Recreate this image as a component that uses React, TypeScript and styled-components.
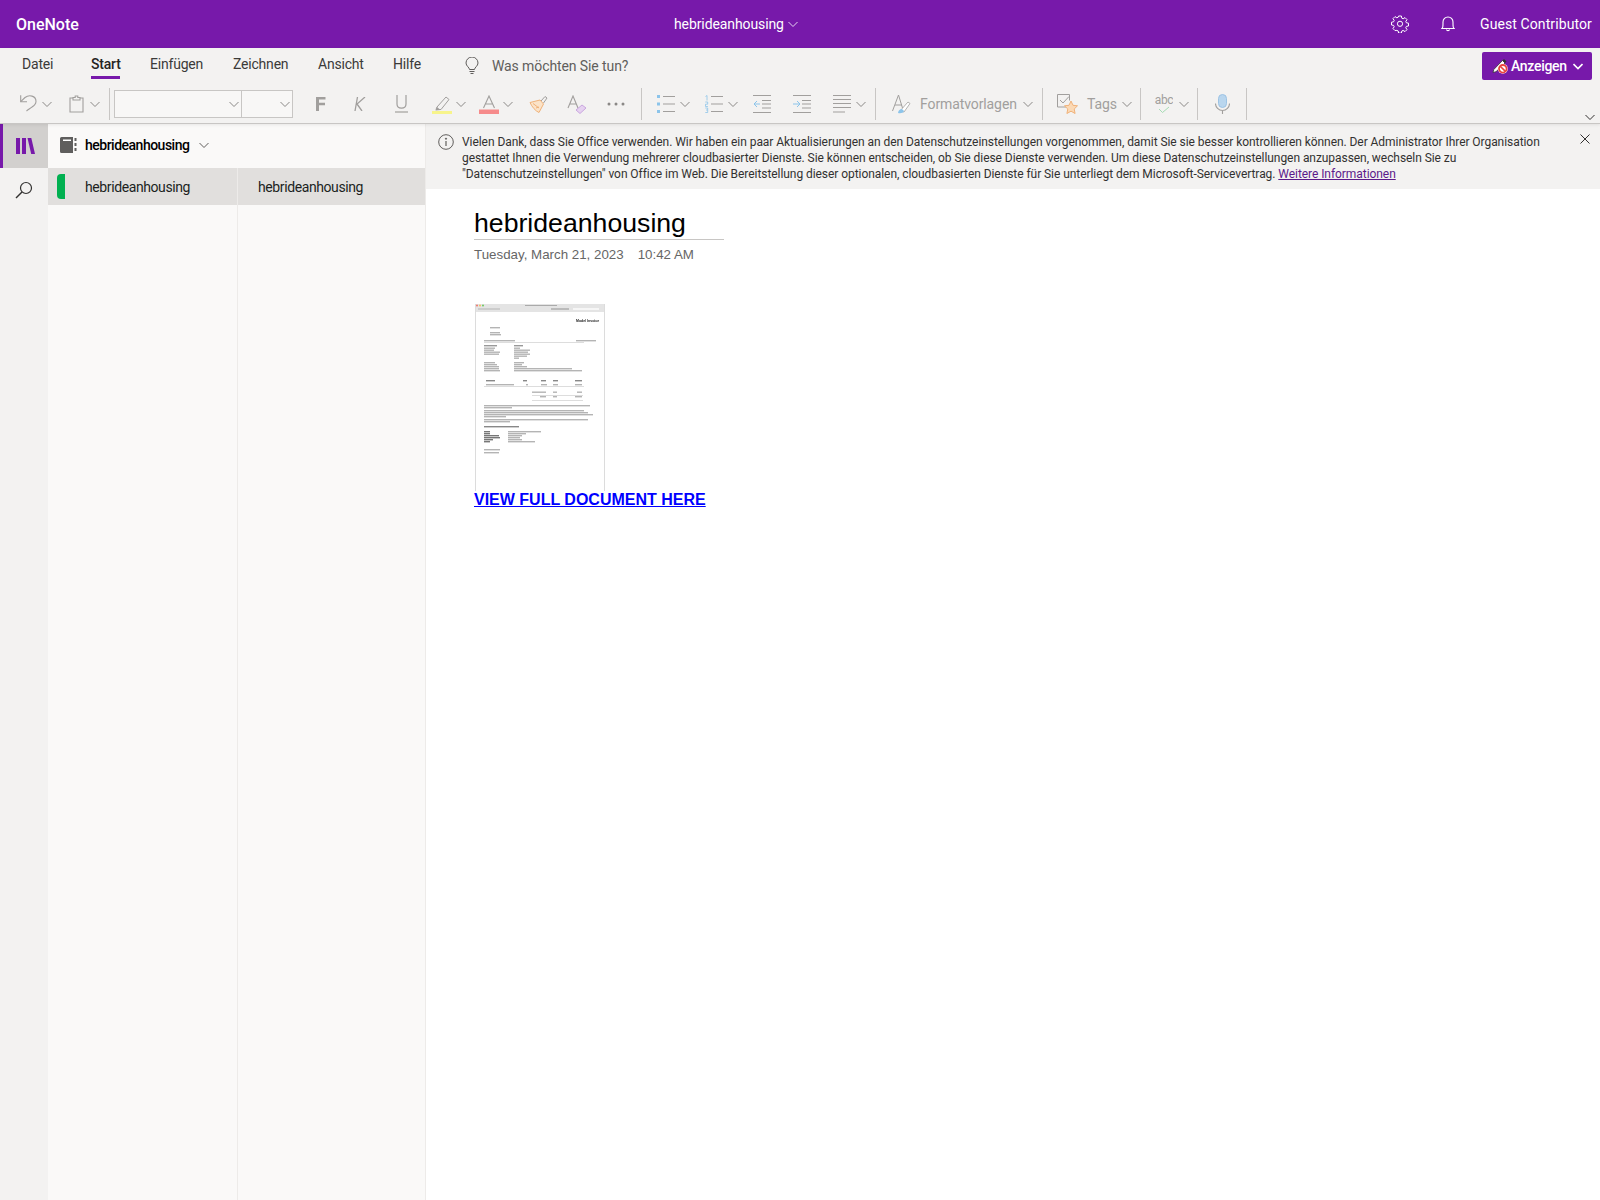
import React from 'react';
import styled, { createGlobalStyle } from 'styled-components';

const UI_FONT = 'Roboto, "Noto Sans", sans-serif';
const PURPLE = '#7719aa';

const GlobalStyle = createGlobalStyle`
  html, body {
    margin: 0;
    padding: 0;
    background: #fff;
    overflow: hidden;
  }
  * {
    box-sizing: border-box;
  }
  svg {
    flex: none;
  }
`;

const Page = styled.div`
  width: 1600px;
  height: 1200px;
  display: flex;
  flex-direction: column;
  overflow: hidden;
  font-family: ${UI_FONT};
  color: #252423;
`;

const TopBar = styled.header`
  height: 48px;
  flex: none;
  display: flex;
  align-items: center;
  background: ${PURPLE};
  color: #fff;
  padding: 0 8px 0 16px;
`;

const Brand = styled.div`
  width: 658px;
  font-size: 16px;
  font-weight: 500;
`;

const DocTitle = styled.div`
  display: flex;
  align-items: center;
  gap: 4px;
  font-size: 14px;
  letter-spacing: -0.1px;
`;

const TopRight = styled.div`
  margin-left: auto;
  display: flex;
  align-items: center;
`;

const TopIcon = styled.span`
  width: 48px;
  height: 48px;
  display: flex;
  align-items: center;
  justify-content: center;
`;

const UserName = styled.span`
  width: 112px;
  margin-left: 8px;
  font-size: 14px;
  letter-spacing: 0.1px;
  white-space: nowrap;
`;

const Ribbon = styled.div`
  height: 76px;
  flex: none;
  position: relative;
  z-index: 2;
  background: #f3f2f1;
  border-bottom: 1px solid #c8c6c4;
  box-shadow: 0 1px 3px rgba(0, 0, 0, 0.08);
`;

const TabRow = styled.div`
  height: 34px;
  display: flex;
  align-items: flex-start;
  padding: 0 8px 0 22px;
`;

const Tab = styled.div<{ $w: number; $mr?: number; $active?: boolean }>`
  width: ${(p) => p.$w}px;
  height: 31px;
  margin-right: ${(p) => p.$mr ?? 30}px;
  padding-top: 5px;
  font-size: 14px;
  line-height: 22px;
  letter-spacing: -0.2px;
  white-space: nowrap;
  color: ${(p) => (p.$active ? '#252423' : '#3b3a39')};
  font-weight: ${(p) => (p.$active ? 500 : 400)};
  border-bottom: 3px solid ${(p) => (p.$active ? PURPLE : 'transparent')};
`;

const SearchHint = styled.div`
  display: flex;
  align-items: center;
  gap: 13px;
  margin-left: 14px;
  height: 35px;
  font-size: 14px;
  letter-spacing: -0.1px;
  color: #605e5c;
`;

const ViewButton = styled.div`
  margin: 4px 0 0 auto;
  width: 110px;
  height: 28px;
  display: flex;
  align-items: center;
  padding-left: 10px;
  border-radius: 2px;
  background: ${PURPLE};
  color: #fff;
  font-size: 14px;
  font-weight: 500;
  letter-spacing: -0.3px;
`;

const ViewLabel = styled.span`
  width: 56px;
  margin: 0 3px;
  white-space: nowrap;
`;

const ToolRow = styled.div`
  height: 41px;
  display: flex;
  align-items: center;
  padding-top: 3px;
`;

const Tool = styled.span<{ $w?: number; $ml?: number }>`
  flex: none;
  width: ${(p) => p.$w ?? 24}px;
  margin-left: ${(p) => p.$ml ?? 0}px;
  height: 30px;
  display: flex;
  align-items: center;
  justify-content: center;
`;

const Separator = styled.span<{ $ml: number }>`
  flex: none;
  width: 1px;
  height: 32px;
  margin-left: ${(p) => p.$ml}px;
  background: #c8c6c4;
`;

const FontBox = styled.span<{ $w: number; $ml?: number }>`
  flex: none;
  width: ${(p) => p.$w}px;
  height: 28px;
  margin-left: ${(p) => p.$ml ?? 0}px;
  margin-right: -1px;
  display: flex;
  align-items: center;
  justify-content: flex-end;
  padding-right: 2px;
  background: #f8f7f6;
  border: 1px solid #c8c6c4;
`;

const ToolLabel = styled.span<{ $w: number; $ml: number }>`
  flex: none;
  width: ${(p) => p.$w}px;
  margin-left: ${(p) => p.$ml}px;
  font-size: 14px;
  letter-spacing: -0.1px;
  white-space: nowrap;
  color: #a19f9d;
`;

const CollapseRibbon = styled.span`
  position: absolute;
  right: 5px;
  bottom: 0;
  height: 12px;
  display: flex;
  align-items: center;
`;

const Body = styled.div`
  flex: 1;
  display: flex;
  min-height: 0;
`;

const Rail = styled.nav`
  width: 48px;
  flex: none;
  background: #f3f2f1;
`;

const RailItem = styled.div<{ $active?: boolean }>`
  height: 44px;
  display: flex;
  align-items: center;
  justify-content: center;
  background: ${(p) => (p.$active ? '#d2d0ce' : 'transparent')};
  border-left: ${(p) => (p.$active ? `3px solid ${PURPLE}` : 'none')};
`;

const NavPane = styled.aside`
  width: 378px;
  flex: none;
  display: flex;
  flex-direction: column;
  background: #faf9f8;
  border-right: 1px solid #edebe9;
`;

const NavHeader = styled.div`
  height: 44px;
  flex: none;
  display: flex;
  align-items: center;
  padding: 0 0 2px 12px;
  font-size: 14px;
  font-weight: 500;
  letter-spacing: -0.5px;
  color: #000;
`;

const NotebookName = styled.span`
  width: 104px;
  margin: 0 10px 0 8px;
  white-space: nowrap;
`;

const NavColumns = styled.div`
  flex: 1;
  display: flex;
`;

const SectionColumn = styled.div`
  width: 190px;
  flex: none;
  border-right: 1px solid #edebe9;
`;

const PageColumn = styled.div`
  flex: 1;
`;

const NavRow = styled.div<{ $pad: number }>`
  height: 37px;
  display: flex;
  align-items: center;
  padding-left: ${(p) => p.$pad}px;
  background: #e1dfdd;
  font-size: 14px;
  letter-spacing: -0.4px;
  color: #201f1e;
`;

const SectionTab = styled.span`
  width: 8px;
  height: 25px;
  margin-right: 20px;
  background: #00b050;
  border-radius: 4px 0 0 4px;
`;

const Content = styled.main`
  flex: 1;
  min-width: 0;
  display: flex;
  flex-direction: column;
  background: #fff;
`;

const Notice = styled.div`
  height: 65px;
  flex: none;
  display: flex;
  align-items: flex-start;
  padding: 10px 10px 0 12px;
  background: #f3f2f1;
`;

const NoticeText = styled.p`
  margin: 0 0 0 8px;
  flex: 1;
  font-size: 12px;
  line-height: 16px;
  letter-spacing: -0.06px;
  white-space: nowrap;
  color: #323130;
`;

const NoticeLink = styled.a`
  color: #5c1a8a;
  text-decoration: underline;
`;

const Sheet = styled.article`
  padding: 17px 0 0 48px;
  font-family: "Liberation Sans", Arial, sans-serif;
`;

const PageTitle = styled.h1`
  width: 250px;
  height: 34px;
  margin: 0;
  border-bottom: 1px solid #c8c6c4;
  font-size: 26.67px;
  font-weight: 400;
  line-height: 34px;
  color: #000;
`;

const PageDate = styled.div`
  display: flex;
  gap: 14px;
  margin-top: 7px;
  font-size: 13.33px;
  line-height: 16px;
  color: #666;
`;

const Thumb = styled.svg`
  display: block;
  margin: 41px 0 0 1px;
`;

const DocLink = styled.a`
  display: block;
  font-size: 16px;
  font-weight: 700;
  line-height: 18px;
  color: #0000ff;
  text-decoration: underline;
`;

const Chevron = ({ color = '#8a8886', weight = 1 }: { color?: string; weight?: number }) => (
  <svg width="10" height="10" viewBox="0 0 10 10" fill="none">
    <path d="M0.5 3L5 7.5L9.5 3" stroke={color} strokeWidth={weight} />
  </svg>
);

const Gear = () => (
  <svg width="18" height="18" viewBox="0 0 18 18" fill="none" stroke="#fff" strokeWidth="1">
    <path d="M7.6 1h2.8l.4 2.2 1.3.6 1.9-1.2 2 2-1.2 1.9.6 1.3 2.1.4v2.8l-2.1.4-.6 1.3 1.2 1.9-2 2-1.9-1.2-1.3.6-.4 2.1H7.6l-.4-2.1-1.3-.6L4 15.6l-2-2 1.2-1.9-.6-1.3-2.1-.4V7.2l2.1-.4.6-1.3L2 3.6l2-2 1.9 1.2 1.3-.6z" />
    <circle cx="9" cy="8.8" r="2.6" />
  </svg>
);

const Bell = () => (
  <svg width="14" height="16" viewBox="0 0 14 16" fill="none" stroke="#fff" strokeWidth="1.1">
    <path d="M1 12.5c1-.6 1-2 1-4.5V6a5 5 0 0 1 10 0v2c0 2.500 0 3.900 1 4.500z" />
    <path d="M5.500 13.500c.3 1.500 2.700 1.500 3 0" />
  </svg>
);

const Bulb = () => (
  <svg width="14" height="18" viewBox="0 0 14 18" fill="none" stroke="#605e5c" strokeWidth="1">
    <path d="M4.500 12.500c0-2-3.500-3.500-3.500-6.500a6 6 0 0 1 12 0c0 3-3.500 4.500-3.500 6.500z" />
    <path d="M4.500 14.500h5M5.500 16.500h3" />
  </svg>
);

const PenBlocked = () => (
  <svg width="16" height="16" viewBox="0 0 16 16" fill="none">
    <path d="M1 14.500l.8-3L10.500 2.500l2.500 2.500L4 13.700z" fill="#fff" stroke="#333" strokeWidth=".8" />
    <path d="M10.500 2.500L12 1l2.500 2.500L13 5z" fill="#333" />
    <circle cx="10.800" cy="10.800" r="5" fill="#fff" />
    <circle cx="10.800" cy="10.800" r="3.800" fill="none" stroke="#e8433f" strokeWidth="1.800" />
    <path d="M8.200 8.200l5.200 5.200" stroke="#e8433f" strokeWidth="1.600" />
  </svg>
);

const Undo = () => (
  <svg width="18" height="20" viewBox="0 0 18 20" fill="none" stroke="#a19f9d" strokeWidth="1.1">
    <path d="M.7 1.300V7.700H7" />
    <path d="M.7 7.700L5 3.500C9 .5 16 1.500 16 7.500c0 3-2 4-9.500 9.500" />
  </svg>
);

const Clipboard = () => (
  <svg width="15" height="18" viewBox="0 0 15 18" fill="none" stroke="#a19f9d" strokeWidth="1.1">
    <path d="M4 3H1v14h13V3h-3" />
    <path d="M4 5V2.500h2.200V1h2.600v1.500H11V5z" />
  </svg>
);

const BoldF = () => (
  <svg width="10" height="14" viewBox="0 0 10 14" fill="#a19f9d">
    <path d="M0 0h9.500v2.500H3v3.300h6v2.400H3V14H0z" />
  </svg>
);

const ItalicK = () => (
  <svg width="12" height="14" viewBox="0 0 12 14" fill="none" stroke="#a19f9d" strokeWidth="1.300">
    <path d="M3.500 0L1 14M11 0L3 7l5 7" />
  </svg>
);

const UnderlineU = () => (
  <svg width="13" height="18" viewBox="0 0 13 18" fill="none" stroke="#a19f9d" strokeWidth="1.200">
    <path d="M2 0v9c0 5.500 9 5.500 9 0V0" />
    <path d="M0 17h13" />
  </svg>
);

const Highlight = () => (
  <svg width="21" height="19" viewBox="0 0 21 19" fill="none">
    <path d="M5 12l9-10 3 2.500-8 10H4z" stroke="#a19f9d" strokeWidth="1" />
    <path d="M5 12l3.500 3L3.500 15.500z" fill="#a19f9d" />
    <rect y="16" width="20" height="3" fill="#f7f48b" />
  </svg>
);

const FontColor = () => (
  <svg width="20" height="19" viewBox="0 0 20 19" fill="none">
    <path d="M4.500 13L10 1l5.500 12M6.200 9h7.600" stroke="#a19f9d" strokeWidth="1.100" />
    <rect y="14.500" width="20" height="4.500" fill="#f68b8b" />
  </svg>
);

const Brush = () => (
  <svg width="19" height="19" viewBox="0 0 19 19" fill="none">
    <path d="M12 6l4-4.500 2 1.500-3.500 5" stroke="#a19f9d" strokeWidth="1" />
    <path d="M1 7.500l10-2.500 3.500 4L10 17.500C6.500 16 3 12 1 7.500z" fill="#fbe3c8" stroke="#f0b27a" strokeWidth="1" />
    <path d="M4 8.500l6 4.500M7 13l3-1" stroke="#f0b27a" strokeWidth="1" />
  </svg>
);

const ClearFormat = () => (
  <svg width="20" height="19" viewBox="0 0 20 19" fill="none">
    <path d="M1 13L6 1l5 12M2.600 9h6.800" stroke="#a19f9d" strokeWidth="1.100" />
    <path d="M9 15l6-5 4 3-6 5.500z" fill="#e6d2f0" stroke="#c9a6df" strokeWidth="1" />
  </svg>
);

const More = () => (
  <svg width="18" height="4" viewBox="0 0 18 4" fill="#8a8886">
    <circle cx="2" cy="2" r="1.500" />
    <circle cx="9" cy="2" r="1.500" />
    <circle cx="16" cy="2" r="1.500" />
  </svg>
);

const Bullets = () => (
  <svg width="18" height="18" viewBox="0 0 18 18" fill="none">
    <path d="M6 1.500h12M6 9h12M6 16.500h12" stroke="#a19f9d" strokeWidth="1" />
    <rect width="3" height="3" fill="#8cc4ea" />
    <rect y="7.500" width="3" height="3" fill="#8cc4ea" />
    <rect y="15" width="3" height="3" fill="#8cc4ea" />
  </svg>
);

const Numbered = () => (
  <svg width="18" height="18" viewBox="0 0 18 18" fill="none">
    <path d="M6 1.500h12M6 9h12M6 16.500h12" stroke="#a19f9d" strokeWidth="1" />
    <path d="M0.500 1.500L2 .5v5M.3 7h2.400v2.200H.5v2.300h2.400M.3 13h2.400v2H1m1.700 0v2.500H.3" stroke="#8cc4ea" strokeWidth=".8" />
  </svg>
);

const Outdent = () => (
  <svg width="18" height="18" viewBox="0 0 18 18" fill="none">
    <path d="M0 .5h18M9 5.500h9M9 9h9M9 13h9M0 17.500h18" stroke="#a19f9d" strokeWidth="1" />
    <path d="M7 9H1M4 6L1 9l3 3" stroke="#8cc4ea" strokeWidth="1" />
  </svg>
);

const Indent = () => (
  <svg width="18" height="18" viewBox="0 0 18 18" fill="none">
    <path d="M0 .5h18M9 5.500h9M9 9h9M9 13h9M0 17.500h18" stroke="#a19f9d" strokeWidth="1" />
    <path d="M0 9h6.500M4 6l3 3-3 3" stroke="#8cc4ea" strokeWidth="1" />
  </svg>
);

const AlignLines = () => (
  <svg width="18" height="18" viewBox="0 0 18 18" fill="none" stroke="#a19f9d" strokeWidth="1">
    <path d="M0 .5h18M0 4.500h18M0 8.500h18M0 12.500h18M0 17h12" />
  </svg>
);

const Styles = () => (
  <svg width="19" height="20" viewBox="0 0 19 20" fill="none">
    <path d="M0.500 17L6.500 1l4 13M3 11h7" stroke="#a19f9d" strokeWidth="1" />
    <path d="M8 17l8-9 2 1.500-6 8.500z" fill="#fff" stroke="#a19f9d" strokeWidth=".8" />
    <path d="M6 19c.5-3 2-4 4-4l2 2c-1 2-3 2.500-6 2z" fill="#8cc4ea" />
  </svg>
);

const TagStar = () => (
  <svg width="21" height="20" viewBox="0 0 21 20" fill="none">
    <path d="M9 13H.5V.5h12v6" stroke="#a19f9d" strokeWidth="1" />
    <path d="M3 6l3 3 6-6.500" stroke="#a19f9d" strokeWidth="1" />
    <path d="M14 7l2 4.300 4.500.5-3.300 3.200.9 4.500-4.100-2.300-4.100 2.300.9-4.500-3.300-3.200 4.500-.5z" fill="#fbd9b5" stroke="#f0b27a" strokeWidth="1" />
  </svg>
);

const Spelling = () => (
  <svg width="18" height="20" viewBox="0 0 18 20" fill="none">
    <text x="9" y="10" textAnchor="middle" fontSize="12" fontFamily={UI_FONT} fill="#a19f9d" letterSpacing="-.3">abc</text>
    <path d="M4 15l3.500 3.500L14 13" stroke="#a5dcb4" strokeWidth="1" />
  </svg>
);

const Mic = () => (
  <svg width="15" height="20" viewBox="0 0 15 20" fill="none">
    <rect x="3.500" y="0.500" width="8" height="13" rx="4" fill="#b9d6ee" stroke="#9cc3e4" strokeWidth="1" />
    <path d="M.5 9.500a7 7 0 0 0 14 0M7.500 16.500V20" stroke="#a19f9d" strokeWidth="1.100" />
  </svg>
);

const Library = () => (
  <svg width="19" height="16" viewBox="0 0 19 16" fill={PURPLE}>
    <rect width="4" height="16" />
    <rect x="6" width="4" height="16" />
    <path d="M11.500 0h3.800L19 16h-3.800z" />
  </svg>
);

const SearchGlass = () => (
  <svg width="18" height="18" viewBox="0 0 18 18" fill="none" stroke="#323130" strokeWidth="1.200">
    <circle cx="11" cy="7" r="5.500" />
    <path d="M7 11l-6 6" strokeWidth="1.500" />
  </svg>
);

const Notebook = () => (
  <svg width="17" height="16" viewBox="0 0 17 16" fill="#5f5e5d">
    <path d="M1.500 0H13v16H1.500A1.500 1.500 0 0 1 0 14.500V1.500A1.500 1.500 0 0 1 1.500 0z" />
    <rect x="3" y="2.500" width="8" height="1.500" fill="#fff" />
    <rect x="14.500" y="1" width="2" height="3" />
    <rect x="14.500" y="6" width="2" height="3" />
    <rect x="14.500" y="11" width="2" height="3" />
  </svg>
);

const Info = () => (
  <svg width="16" height="16" viewBox="0 0 16 16" fill="none" stroke="#605e5c" strokeWidth="1">
    <circle cx="8" cy="8" r="7.300" />
    <path d="M8 7v5" strokeWidth="1.200" />
    <circle cx="8" cy="4.700" r=".6" fill="#605e5c" />
  </svg>
);

const Close = () => (
  <svg width="10" height="10" viewBox="0 0 10 10" fill="none" stroke="#323130" strokeWidth="1">
    <path d="M.5.500l9 9M9.500.500l-9 9" />
  </svg>
);

type Bar = [number, number, number, string?];

// blurred lines of the invoice in the thumbnail: x, y, width, colour
const INVOICE_BARS: Bar[] = [
  [15, 23, 10], [15, 28, 10], [15, 30, 11],
  [9, 36, 31], [101, 36, 20],
  [9, 41, 13, '#999'], [9, 43.5, 11], [9, 45.5, 10], [9, 47.5, 16], [9, 49.5, 15],
  [39, 41, 9, '#999'], [39, 43.5, 6], [39, 45.5, 16], [39, 47.5, 14], [39, 49.5, 16], [39, 51.5, 13], [39, 53.5, 5],
  [9, 58, 11], [9, 60, 13], [9, 62, 15], [9, 64, 15], [9, 66, 16],
  [39, 58, 10], [39, 60, 8], [39, 62, 13], [39, 64, 58], [39, 66, 68],
  [11, 76, 9, '#888'], [48, 76, 4, '#888'], [66, 76, 5, '#888'], [78, 76, 5, '#888'], [100, 76, 7, '#888'],
  [11, 80, 28], [51, 80, 2], [66, 80, 6], [78, 80, 5], [100, 80, 7],
  [57, 87.500, 14], [78, 87.500, 4], [102, 87.500, 5],
  [65, 92, 6], [78, 92, 4], [100, 92, 7],
  [9, 101, 106], [9, 103, 28],
  [9, 106, 100], [9, 108, 104], [9, 110, 109], [9, 112, 22],
  [9, 115, 104], [9, 117, 26],
  [9, 122, 35, '#888'],
  [9, 127, 6, '#777'], [9, 129, 6, '#777'], [9, 131, 15, '#777'], [9, 133, 16, '#777'], [9, 135, 9, '#777'], [9, 137, 6, '#777'],
  [33, 127, 33], [33, 129, 18], [33, 131, 14], [33, 133, 12], [33, 135, 14], [33, 137, 27],
  [9, 145, 16], [9, 148, 15],
];

const RULES = [38.500, 82.500, 91, 96];

const InvoiceThumb = () => (
  <Thumb width="130" height="187" viewBox="0 0 130 187">
    <defs>
      <filter id="soft" x="-5%" y="-5%" width="110%" height="110%">
        <feGaussianBlur stdDeviation="0.7" />
      </filter>
      <filter id="softer" x="-5%" y="-20%" width="110%" height="140%">
        <feGaussianBlur stdDeviation="0.25" />
      </filter>
    </defs>
    <rect width="130" height="187" fill="#fff" />
    <rect width="130" height="8" fill="#e4e4e4" />
    <circle cx="2" cy="1.500" r="0.900" fill="#ee6a5f" />
    <circle cx="5" cy="1.500" r="0.900" fill="#f5be4f" />
    <circle cx="8" cy="1.500" r="0.900" fill="#62c554" />
    <rect x="50" y="1" width="32" height="1" fill="#aaa" />
    <rect x="3" y="4" width="22" height="2" fill="#ccc" />
    <rect x="76" y="4" width="18" height="2" fill="#bbb" />
    <rect x="98" y="4" width="26" height="2" fill="#f6f6f6" />
    <rect x="0" width="1" height="187" fill="#dcdcdc" />
    <rect x="129" width="1" height="187" fill="#dcdcdc" />
    <text x="101" y="18" fontSize="3.500" fontWeight="700" fontFamily="'Liberation Sans', sans-serif" fill="#222" filter="url(#softer)">Model Invoice</text>
    <g filter="url(#soft)">
      {INVOICE_BARS.map(([x, y, w, c], i) => (
        <rect key={i} x={x} y={y} width={w} height="1.400" fill={c ?? '#b4b4b4'} />
      ))}
      {RULES.map((y) => (
        <rect key={y} x={y > 90 ? 57 : 9} y={y} width={y > 90 ? 51 : 100} height="0.500" fill="#bbb" />
      ))}
    </g>
  </Thumb>
);

const App: React.FC = () => (
  <Page>
    <GlobalStyle />
    <TopBar>
      <Brand>OneNote</Brand>
      <DocTitle>
        hebrideanhousing
        <Chevron color="#e6d5ef" />
      </DocTitle>
      <TopRight>
        <TopIcon>
          <Gear />
        </TopIcon>
        <TopIcon>
          <Bell />
        </TopIcon>
        <UserName>Guest Contributor</UserName>
      </TopRight>
    </TopBar>

    <Ribbon>
      <TabRow>
        <Tab $w={32} $mr={37}>Datei</Tab>
        <Tab $w={29} $active>Start</Tab>
        <Tab $w={53}>Einfügen</Tab>
        <Tab $w={55}>Zeichnen</Tab>
        <Tab $w={45}>Ansicht</Tab>
        <Tab $w={28}>Hilfe</Tab>
        <SearchHint>
          <Bulb />
          Was möchten Sie tun?
        </SearchHint>
        <ViewButton>
          <PenBlocked />
          <ViewLabel>Anzeigen</ViewLabel>
          <Tool $w={16}>
            <Chevron color="#fff" weight={1.6} />
          </Tool>
        </ViewButton>
      </TabRow>
      <ToolRow>
        <Tool $w={22} $ml={18}><Undo /></Tool>
        <Tool $w={14}><Chevron /></Tool>
        <Tool $w={22} $ml={11}><Clipboard /></Tool>
        <Tool $w={14} $ml={1}><Chevron /></Tool>
        <Separator $ml={7} />
        <FontBox $w={128} $ml={4}><Chevron /></FontBox>
        <FontBox $w={52}><Chevron /></FontBox>
        <Tool $ml={17}><BoldF /></Tool>
        <Tool $ml={15}><ItalicK /></Tool>
        <Tool $ml={17}><UnderlineU /></Tool>
        <Tool $ml={17}><Highlight /></Tool>
        <Tool $w={14}><Chevron /></Tool>
        <Tool $ml={9}><FontColor /></Tool>
        <Tool $w={14}><Chevron /></Tool>
        <Tool $ml={11}><Brush /></Tool>
        <Tool $ml={15}><ClearFormat /></Tool>
        <Tool $ml={15}><More /></Tool>
        <Separator $ml={13} />
        <Tool $ml={12}><Bullets /></Tool>
        <Tool $w={14}><Chevron /></Tool>
        <Tool $ml={10}><Numbered /></Tool>
        <Tool $w={14}><Chevron /></Tool>
        <Tool $ml={10}><Outdent /></Tool>
        <Tool $ml={16}><Indent /></Tool>
        <Tool $ml={16}><AlignLines /></Tool>
        <Tool $w={14}><Chevron /></Tool>
        <Separator $ml={7} />
        <Tool $ml={13}><Styles /></Tool>
        <ToolLabel $w={97} $ml={7}>Formatvorlagen</ToolLabel>
        <Tool $w={14} $ml={4}><Chevron /></Tool>
        <Separator $ml={7} />
        <Tool $ml={12}><TagStar /></Tool>
        <ToolLabel $w={28} $ml={8}>Tags</ToolLabel>
        <Tool $w={14} $ml={5}><Chevron /></Tool>
        <Separator $ml={6} />
        <Tool $ml={11}><Spelling /></Tool>
        <Tool $w={14} $ml={1}><Chevron /></Tool>
        <Separator $ml={6} />
        <Tool $ml={12}><Mic /></Tool>
        <Separator $ml={12} />
      </ToolRow>
      <CollapseRibbon>
        <Chevron color="#323130" />
      </CollapseRibbon>
    </Ribbon>

    <Body>
      <Rail>
        <RailItem $active>
          <Library />
        </RailItem>
        <RailItem>
          <SearchGlass />
        </RailItem>
      </Rail>
      <NavPane>
        <NavHeader>
          <Notebook />
          <NotebookName>hebrideanhousing</NotebookName>
          <Chevron color="#605e5c" />
        </NavHeader>
        <NavColumns>
          <SectionColumn>
            <NavRow $pad={9}>
              <SectionTab />
              hebrideanhousing
            </NavRow>
          </SectionColumn>
          <PageColumn>
            <NavRow $pad={20}>hebrideanhousing</NavRow>
          </PageColumn>
        </NavColumns>
      </NavPane>
      <Content>
        <Notice>
          <Info />
          <NoticeText>
            Vielen Dank, dass Sie Office verwenden. Wir haben ein paar Aktualisierungen an den Datenschutzeinstellungen vorgenommen, damit Sie sie besser kontrollieren können. Der Administrator Ihrer Organisation
            <br />
            gestattet Ihnen die Verwendung mehrerer cloudbasierter Dienste. Sie können entscheiden, ob Sie diese Dienste verwenden. Um diese Datenschutzeinstellungen anzupassen, wechseln Sie zu
            <br />
            "Datenschutzeinstellungen" von Office im Web. Die Bereitstellung dieser optionalen, cloudbasierten Dienste für Sie unterliegt dem Microsoft-Servicevertrag.{' '}
            <NoticeLink>Weitere Informationen</NoticeLink>
          </NoticeText>
          <Close />
        </Notice>
        <Sheet>
          <PageTitle>hebrideanhousing</PageTitle>
          <PageDate>
            <span>Tuesday, March 21, 2023</span>
            <span>10:42 AM</span>
          </PageDate>
          <InvoiceThumb />
          <DocLink>VIEW FULL DOCUMENT HERE</DocLink>
        </Sheet>
      </Content>
    </Body>
  </Page>
);

export default App;
